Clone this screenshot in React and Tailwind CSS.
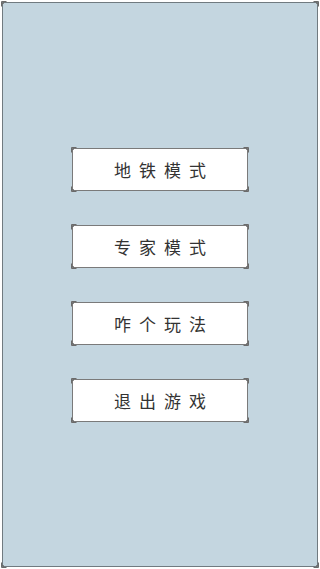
import React from "react";

const items = ["地铁模式", "专家模式", "咋个玩法", "退出游戏"];

function Corner({ className }) {
	return (
		<svg
			className={`absolute w-[6px] h-[6px] ${className}`}
			viewBox="0 0 6 6"
			fill="none"
			stroke="#6b6b6b"
			strokeWidth="1"
		>
			<path d="M0.5 5.5 V0.5 H5.5 M2.5 0.5 V2.5 H0.5" />
		</svg>
	);
}

function Corners() {
	return (
		<>
			<Corner className="-top-[2px] -left-[2px]" />
			<Corner className="-top-[2px] -right-[2px] rotate-90" />
			<Corner className="-bottom-[2px] -right-[2px] rotate-180" />
			<Corner className="-bottom-[2px] -left-[2px] -rotate-90" />
		</>
	);
}

export default function App() {
	return (
		<div className="w-[320px] h-[569px] bg-white p-[2px] font-['Noto_Sans_CJK_SC',sans-serif]">
			<div className="relative h-full w-full border border-[#707a80] bg-[#c4d6e0]">
				<Corners />
				<div className="flex flex-col items-center gap-[34px] pt-[145px]">
					{items.map((label) => (
						<button
							key={label}
							className="relative flex h-[43px] w-[176px] items-center justify-center border border-[#7a7a7a] bg-white text-[17px] tracking-[8px] text-[#333] pl-[8px]"
						>
							<Corners />
							{label}
						</button>
					))}
				</div>
			</div>
		</div>
	);
}
